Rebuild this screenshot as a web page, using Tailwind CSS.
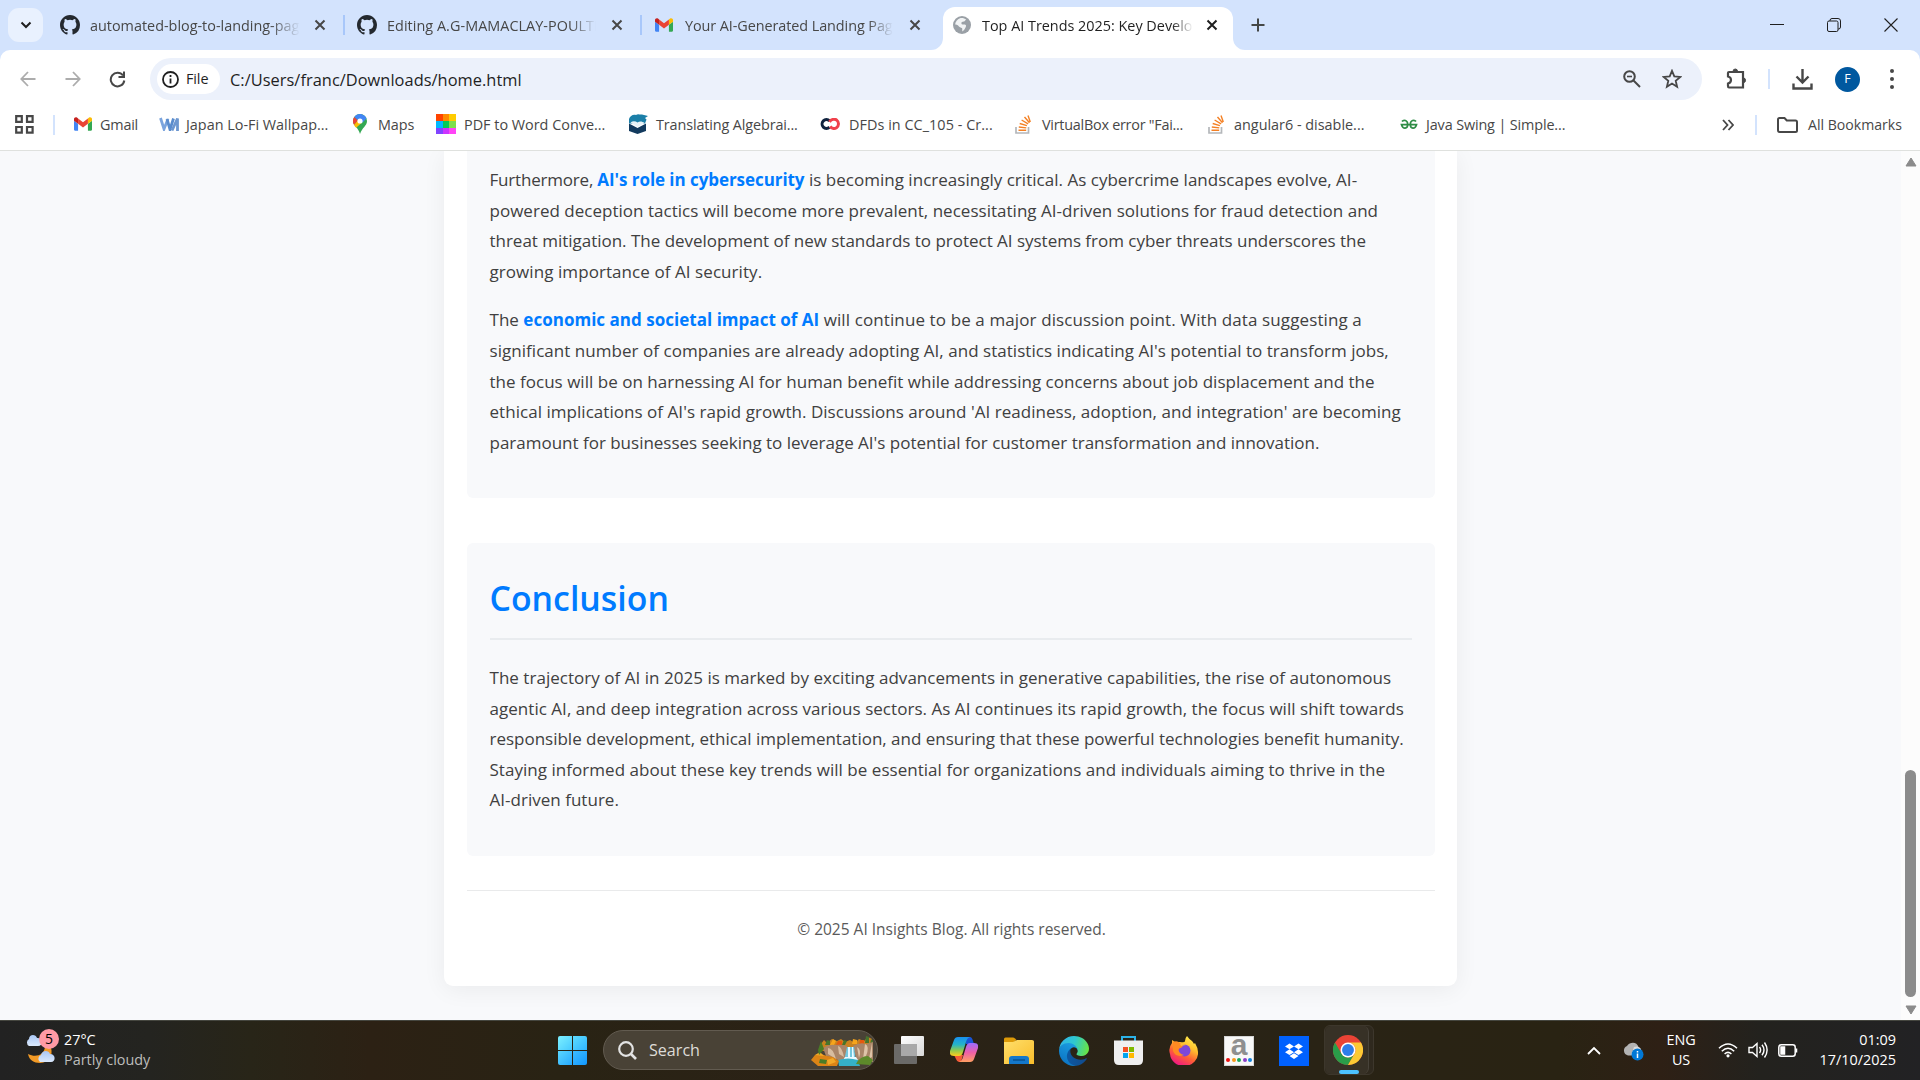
<!DOCTYPE html>
<html lang="en">
<head>
<meta charset="utf-8">
<title>Top AI Trends 2025</title>
<script src="https://cdn.jsdelivr.net/npm/@tailwindcss/browser@4"></script>
</head>
<body class="w-[1920px] h-[1080px] overflow-hidden flex flex-col bg-white font-['Open_Sans',sans-serif] text-[#474747]">
<svg class="hidden">
  <defs>
    <symbol id="github" viewBox="0 0 16 16"><path fill="#24292f" d="M8 0C3.58 0 0 3.58 0 8c0 3.54 2.29 6.53 5.47 7.59.4.07.55-.17.55-.38 0-.19-.01-.82-.01-1.49-2.01.37-2.53-.49-2.69-.94-.09-.23-.48-.94-.82-1.13-.28-.15-.68-.52-.01-.53.63-.01 1.08.58 1.23.82.72 1.21 1.87.87 2.33.66.07-.52.28-.87.51-1.07-1.78-.2-3.64-.89-3.64-3.95 0-.87.31-1.59.82-2.15-.08-.2-.36-1.02.08-2.12 0 0 .67-.21 2.2.82a7.6 7.6 0 0 1 4 0c1.53-1.04 2.2-.82 2.2-.82.44 1.1.16 1.92.08 2.12.51.56.82 1.27.82 2.15 0 3.07-1.87 3.75-3.65 3.95.29.25.54.73.54 1.48 0 1.07-.01 1.93-.01 2.2 0 .21.15.46.55.38A8.01 8.01 0 0 0 16 8c0-4.42-3.58-8-8-8z"/></symbol>
    <symbol id="gmail" viewBox="52 42 88 66"><path fill="#4285f4" d="M58 108h14V74L52 59v43c0 3.32 2.69 6 6 6"/><path fill="#34a853" d="M120 108h14c3.32 0 6-2.69 6-6V59l-20 15"/><path fill="#fbbc04" d="M120 48v26l20-15v-8c0-7.42-8.47-11.65-14.4-7.2"/><path fill="#ea4335" d="M72 74V48l24 18 24-18v26L96 92"/><path fill="#c5221f" d="M52 51v8l20 15V48l-5.6-4.2c-5.94-4.45-14.4-.22-14.4 7.2"/></symbol>
    <symbol id="close" viewBox="0 0 12 12"><path d="M1.5 1.5l9 9M10.500 1.500l-9 9" stroke="currentColor" stroke-width="2" fill="none"/></symbol>
    <symbol id="stack" viewBox="0 0 16 19"><path d="M1 12v6h12.500v-6" fill="none" stroke="#b4b7ba" stroke-width="1.700"/><path d="M3.500 15.200h7.700M3.800 12l7.500.9M4.700 8.500l7.200 2.200M6.600 5l6.500 3.900M9.500 2l5 5.800M13 .5l2.300 6.500" stroke="#f48024" stroke-width="1.400" fill="none"/></symbol>
  </defs>
</svg>

<!-- Tab strip -->
<header class="h-[50px] shrink-0 bg-[#d3e3fd] flex items-center text-[14.4px] leading-[20px] relative">
  <button class="ml-2 w-[35px] h-[34px] rounded-[11px] bg-[#e9f1fe] flex items-center justify-center"><svg width="12" height="8" viewBox="0 0 12 8"><path d="M1.500 1.500L6 6l4.500-4.500" fill="none" stroke="#1f1f1f" stroke-width="2"/></svg></button>
  <div class="ml-[17px] w-[297px] flex items-center">
    <svg class="w-5 h-5 shrink-0"><use href="#github"/></svg>
    <span class="ml-[10px] w-[210px] pt-px overflow-hidden whitespace-nowrap mask-r-from-86%">automated-blog-to-landing-page</span>
    <svg class="ml-[14px] w-3 h-3"><use href="#close"/></svg>
    <i class="ml-[17px] w-[2px] h-5 bg-[#a8c7fa]"></i>
  </div>
  <div class="w-[298px] flex items-center">
    <svg class="w-5 h-5 shrink-0"><use href="#github"/></svg>
    <span class="ml-[10px] w-[209px] pt-px overflow-hidden whitespace-nowrap mask-r-from-88% tracking-[0.050px]">Editing A.G-MAMACLAY-POULTRY</span>
    <svg class="ml-[15px] w-3 h-3"><use href="#close"/></svg>
    <i class="ml-[17px] w-[2px] h-5 bg-[#a8c7fa]"></i>
  </div>
  <div class="w-[288px] flex items-center">
    <svg class="w-[18px] h-[14px] shrink-0"><use href="#gmail"/></svg>
    <span class="ml-3 w-[208px] pt-px overflow-hidden whitespace-nowrap mask-r-from-88% tracking-[-0.070px]">Your AI-Generated Landing Page</span>
    <svg class="ml-4 w-3 h-3"><use href="#close"/></svg>
  </div>
  <div class="w-[290px] h-[43px] mt-[7px] rounded-t-[12px] bg-white flex items-center pb-[7px] pl-[10px] text-[#1f1f1f] relative">
    <svg class="w-[18px] h-[18px] shrink-0" viewBox="0 0 18 18"><circle cx="9" cy="9" r="9" fill="#9aa0a6"/><path d="M7 2.200c2-.6 4.500-.1 6.300 1.600-1 .2-1.200 1.500-2.400 1.700-1.700.2-2.600.6-2.500 1.900.1 1.200 2 .9 3.500 1.100 1.600.3 1.300 1.900.5 3.200-.8 1.200-1.300 2.600-2.900 3.700-.7-1.200.3-2.300-.6-3.300-1-1-2.600-.8-3.400-2.200-.6-1-2.100-1.500-3.400-1.500C2.400 6 4.300 3.200 7 2.200z" fill="#f1f3f4"/></svg>
    <span class="ml-[11px] w-[211px] pt-px overflow-hidden whitespace-nowrap mask-r-from-90%">Top AI Trends 2025: Key Developments</span>
    <svg class="ml-[13px] w-3 h-3"><use href="#close"/></svg>
    <svg class="absolute -left-3 bottom-0" width="12" height="12"><path d="M12 0v12H0A12 12 0 0 0 12 0z" fill="#fff"/></svg>
    <svg class="absolute -right-3 bottom-0" width="12" height="12"><path d="M0 0v12h12A12 12 0 0 1 0 0z" fill="#fff"/></svg>
  </div>
  <svg class="ml-[18px]" width="14" height="14" viewBox="0 0 14 14"><path d="M7 .5v13M.5 7h13" stroke="#444746" stroke-width="2"/></svg>
  <div class="ml-auto mr-[22px] flex items-center gap-[43px] -mt-px">
    <svg width="14" height="14"><path d="M0 6.500h14" stroke="#1f1f1f"/></svg>
    <svg width="14" height="14" fill="none" stroke="#1f1f1f"><path d="M3 3V2.500A2 2 0 0 1 5 .500h6A2.500 2.500 0 0 1 13.500 3v6a2 2 0 0 1-2 2H11"/><rect x=".5" y="3" width="10.500" height="10.500" rx="1.500"/></svg>
    <svg width="14" height="14"><path d="M.5.5l13 13M13.500.500l-13 13" stroke="#1f1f1f" stroke-width="1.100"/></svg>
  </div>
</header>

<!-- Toolbar -->
<div class="h-[58px] shrink-0 bg-[#d3e3fd]"><div class="h-full bg-white rounded-t-[10px] flex items-center">
  <div class="ml-5 w-[130px] flex items-center gap-[29px]">
    <svg width="16" height="16" fill="none" stroke="#acacac" stroke-width="1.800"><path d="M15.500 8H1.500M8 1L1.300 8 8 15"/></svg>
    <svg width="16" height="16" fill="none" stroke="#acacac" stroke-width="1.800"><path d="M.5 8h14M8 1l6.700 7L8 15"/></svg>
    <svg class="-ml-px" width="17" height="17" fill="none" stroke="#474747" stroke-width="2"><path d="M14 4.500A6.800 6.800 0 1 0 15.300 9.500"/><path d="M15 .500v5.500H9.500" /></svg>
  </div>
  <div class="w-[1552px] h-[42px] rounded-full bg-[#ecf1fb] flex items-center pl-[7px] pr-5 text-[#1f1f1f]">
    <div class="w-[63px] h-[30px] rounded-full bg-white flex items-center pl-[5px] gap-[7px] text-[14.400px] font-medium tracking-[-0.100px]">
      <svg width="17" height="17" viewBox="0 0 17 17" class="shrink-0"><circle cx="8.500" cy="8.500" r="7.500" fill="none" stroke="#1f1f1f" stroke-width="1.800"/><path d="M8.500 7.500v5M8.500 4v2" stroke="#1f1f1f" stroke-width="1.800"/></svg>File</div>
    <span class="ml-[10px] pt-px text-[16.4px] leading-6 tracking-[0.030px]">C:/Users/franc/Downloads/home.html</span>
    <div class="ml-auto flex items-center gap-[21px]">
      <svg width="18" height="18" fill="none" stroke="#474747" stroke-width="2"><circle cx="6.500" cy="6.500" r="5.300"/><path d="M10.500 10.500l6.500 6.500"/><path d="M4 6.500h5" stroke-width="1.600"/></svg>
      <svg width="20" height="20" viewBox="0 0 20 20" fill="none" stroke="#474747" stroke-width="1.800"><path d="M10 1.800l2.300 5.600 6 .5-4.600 3.900 1.400 5.900L10 14.500l-5.100 3.200 1.400-5.900L1.700 7.900l6-.5z"/></svg>
    </div>
  </div>
  <div class="ml-6 w-[190px] flex items-center">
    <svg width="21" height="22" viewBox="0 0 21 22" fill="none" stroke="#474747" stroke-width="2.200"><path d="M3 4h14v15.500H3q-1 0-1-1.500v-2.500c4-1.200 4-6 0-7V5q0-1 1-1z"/><path d="M7 3.500a2.300 2.500 0 0 1 4.600 0zM17.500 10a2 2.300 0 0 1 0 4.600z" fill="#474747" stroke-width="1"/></svg>
    <i class="ml-[21px] w-[2px] h-5 bg-[#d3e3fd]"></i>
    <svg class="ml-[22px]" width="21" height="22" fill="none" stroke="#474747" stroke-width="2.400"><path d="M10.500 1v13M4.500 8.500l6 6 6-6M1.500 15.500v5h18v-5"/></svg>
    <div class="ml-[22px] w-[25px] h-[25px] rounded-full bg-[#00589f] text-white text-[12.500px] flex items-center justify-center">F</div>
    <svg class="ml-[29px]" width="6" height="20" fill="#474747"><circle cx="3" cy="2" r="2"/><circle cx="3" cy="10" r="2"/><circle cx="3" cy="18" r="2"/></svg>
  </div>
</div></div>

<!-- Bookmarks bar -->
<nav class="h-[43px] shrink-0 border-b border-[#dfe1de] flex items-center pb-[9px] text-[14.400px] whitespace-nowrap pl-[15px]">
  <svg class="shrink-0" width="19" height="19" fill="none" stroke="#474747" stroke-width="2.200"><path d="M1.200 1.200h5.600v5.600H1.200zM12 1.200h5.600v5.600H12zM1.200 12h5.600v5.600H1.200zM12 12h5.600v5.600H12z"/></svg>
  <i class="ml-[19px] w-[2px] h-5 bg-[#d3e3fd]"></i>
  <div class="ml-[19px] w-[85px] flex items-center gap-2"><svg class="w-[18px] h-[14px]"><use href="#gmail"/></svg><span class="tracking-[-0.2px]">Gmail</span></div>
  <div class="w-[194px] flex items-center gap-[6px]"><svg width="21" height="14" fill="none" stroke-width="2.800"><path d="M1.500 1l3.500 11L9 2" stroke="#7ba4dd"/><path d="M8 2l3 10.500 3.500-11" stroke="#5a8ccd"/><path d="M13 13.500l5.500-12V14" stroke="#6d97d0"/></svg>Japan Lo-Fi Wallpap...</div>
  <div class="w-[83px] flex items-center gap-[11px]"><svg width="14" height="20" viewBox="0 0 14 20"><path d="M7 0a7 7 0 0 1 7 7c0 5-5 6.500-7 13C5.500 13.500 0 12 0 7a7 7 0 0 1 7-7z" fill="#34a853"/><path d="M1 10.800L9.500.500l-1 8.500-5.300 4.800C2.300 13 1.500 12 1 10.800z" fill="#fbbc04"/><path d="M1.300 3l3.700 3.200L1 10.800C-.6 8-.3 5 1.300 3z" fill="#ea4335"/><path d="M1.300 3C3 .500 6-.500 9.300.400c2 .7 3.500 2 4.200 4L9.500 8.500 5 6.300z" fill="#4285f4"/><circle cx="7" cy="7" r="2.600" fill="#fff"/></svg><span class="tracking-[-0.1px]">Maps</span></div>
  <div class="w-[192px] flex items-center gap-2"><span class="w-5 h-5 grid grid-cols-3"><i class="bg-[#ff4400]"></i><i class="bg-[#ff8a00]"></i><i class="bg-[#ffcc00]"></i><i class="bg-[#00b8ff]"></i><i class="bg-[#00cc55]"></i><i class="bg-[#7ce04c]"></i><i class="bg-[#8044ff]"></i><i class="bg-[#cc33ff]"></i><i class="bg-[#ff44f6]"></i></span>PDF to Word Conve...</div>
  <div class="w-[192px] flex items-center gap-[8px]"><svg width="20" height="20" viewBox="0 0 20 20"><path d="M1 8V5c1-3 4-5 7-4 2-1.500 4 0 6-.500L20 2l-3 2 1.500 1.500L17 9.500H1z" fill="#1b7fa8"/><path d="M1 9.500l8.500 4.500 8.500-4.500V17l-8.500 3L1 17z" fill="#123a5e"/><path d="M2.500 8.500c2.500-2 5-1.500 7 0 2-1.500 4.500-1.500 7 .500l-7 4z" fill="#e8f2f7"/></svg><span class="tracking-[-0.120px]">Translating Algebrai...</span></div>
  <div class="w-[195px] flex items-center gap-2"><svg width="21" height="12" fill="none" stroke-width="3"><path d="M9.500 2.800A4.400 4.400 0 1 0 9.500 9.200" stroke="#10233f"/><path d="M9.500 3.800c2-3 5.500-3 7.200-1.700 2.500 2 2.300 6-.2 7.600-2.400 1.500-5 .5-6.300-1.400" stroke="#f0414b"/></svg><span class="tracking-[0.050px]">DFDs in CC_105 - Cr...</span></div>
  <div class="w-[193px] flex items-center gap-[11px]"><svg class="w-4 h-[19px]"><use href="#stack"/></svg><span class="tracking-[-0.250px]">VirtualBox error "Fai...</span></div>
  <div class="w-[192px] flex items-center gap-[10px]"><svg class="w-4 h-[19px]"><use href="#stack"/></svg>angular6 - disable...</div>
  <div class="flex items-center gap-2"><svg width="18" height="11" fill="none" stroke="#2f8d46" stroke-width="1.700"><path d="M2 2.500C3.500.500 7.700 1 7.700 5.500S3 10.500 1.500 5.700H16.500C15 10.500 10.300 10 10.300 5.500S14.500.500 16 2.500"/></svg><span class="tracking-[-0.130px]">Java Swing | Simple...</span></div>
  <svg class="ml-auto" width="12" height="12" fill="none" stroke="#474747" stroke-width="1.800"><path d="M1 1l4.500 5L1 11M6.500 1L11 6l-4.500 5"/></svg>
  <i class="ml-[21px] w-[2px] h-5 bg-[#d3e3fd]"></i>
  <svg class="ml-5" width="21" height="16" fill="none" stroke="#474747" stroke-width="2"><path d="M1 13V2.500Q1 1 2.500 1H7.500l2.300 2.500H18.500Q20 3.500 20 5v8.500q0 1.500-1.500 1.500H2.500Q1 15 1 13z"/></svg>
  <span class="ml-[10px] mr-[18px] text-[14.1px]">All Bookmarks</span>
</nav>

<!-- Page viewport -->
<div class="flex-1 min-h-0 flex overflow-hidden">
  <main class="flex-1 bg-[#f8f9fb] overflow-hidden">
    <div class="ml-[444px] w-[1013px] h-[835px] bg-white rounded-b-[9px] shadow-[0_4px_23px_rgba(0,0,0,0.06)] pl-[23px] pr-[22px] text-[17px] leading-[30.6px] tracking-[0.020px] text-[#404040] whitespace-nowrap">
      <section class="h-[347px] bg-[#f8f9fb] rounded-b-md pl-[22.500px] pr-[23px] pt-[14px]">
        <p><span class="tracking-[-0.200px]">Furthermore, </span><strong class="text-[#007bff] font-bold tracking-[-0.060px]">AI's role in cybersecurity</strong> is becoming increasingly critical. As cybercrime landscapes evolve, AI-<br>powered deception tactics will become more prevalent, necessitating AI-driven solutions for fraud detection and<br><span class="tracking-[-0.020px]">threat mitigation. The development of new standards to protect AI systems from cyber threats underscores the</span><br><span class="tracking-[0.070px]">growing importance of AI security.</span></p>
        <p class="mt-[18px]">The <strong class="text-[#007bff] font-bold">economic and societal impact of AI</strong> <span class="tracking-[0.110px]">will continue to be a major discussion point. With data suggesting a</span><br><span class="tracking-[0.040px]">significant number of companies are already adopting AI, and statistics indicating AI's potential to transform jobs,</span><br>the focus will be on harnessing AI for human benefit while addressing concerns about job displacement and the<br><span class="tracking-[0.040px]">ethical implications of AI's rapid growth. Discussions around 'AI readiness, adoption, and integration' are becoming</span><br><span class="tracking-[-0.008px]">paramount for businesses seeking to leverage AI's potential for customer transformation and innovation.</span></p>
      </section>
      <section class="mt-[45px] h-[313px] bg-[#f8f9fb] rounded-md pl-[22.500px] pr-[23px] pt-[23px]">
        <h2 class="h-[74px] pt-[7px] border-b-2 border-[#e9ecef] text-[33.800px] leading-[50px] font-semibold text-[#007bff]">Conclusion</h2>
        <p class="mt-[23px]"><span class="tracking-[0.030px]">The trajectory of AI in 2025 is marked by exciting advancements in generative capabilities, the rise of autonomous</span><br><span class="tracking-[0.035px]">agentic AI, and deep integration across various sectors. As AI continues its rapid growth, the focus will shift towards</span><br><span class="tracking-[-0.010px]">responsible development, ethical implementation, and ensuring that these powerful technologies benefit humanity.</span><br><span class="tracking-[0.035px]">Staying informed about these key trends will be essential for organizations and individuals aiming to thrive in the</span><br>AI-driven future.</p>
      </section>
      <footer class="mt-[34px] border-t border-[#e9eaeb] pt-[24px] pl-px text-center text-[15.500px] tracking-normal leading-[28px] text-[#5a5a5a]">© 2025 AI Insights Blog. All rights reserved.</footer>
    </div>
  </main>
  <aside class="w-[19px] bg-[#fcfcfc] flex flex-col items-center pt-[6px] pb-[5px]">
    <svg width="12" height="10"><path d="M6 1l5 8H1z" fill="#8b8b8b" stroke="#8b8b8b" stroke-linejoin="round"/></svg>
    <div class="mt-auto mb-2 w-[11px] h-[227px] rounded-full bg-[#8b8b8b]"></div>
    <svg width="12" height="10"><path d="M6 9L1 1h10z" fill="#8b8b8b" stroke="#8b8b8b" stroke-linejoin="round"/></svg>
  </aside>
</div>

<!-- Taskbar -->
<div class="h-[60px] shrink-0 border-t border-[#45463f] bg-[linear-gradient(90deg,#222222_0,#242420_150px,#282518_250px,#2c2114_370px,#292314_560px,#2b2216_800px,#292316_1200px,#292313_1560px,#2e2015_1660px,#23221e_1760px,#222224_1920px)] flex items-center text-white text-[14.400px] leading-[20px] whitespace-nowrap">
  <div class="w-[558px] h-full flex items-center pl-[25px]">
    <div class="relative w-[34px] h-[42px] -mt-[6px]">
      <svg width="34" height="42" viewBox="0 0 34 42"><defs><linearGradient id="cl" x1="0" y1="0" x2="0" y2="1"><stop stop-color="#a9c7f5"/><stop offset="1" stop-color="#dbe9fc"/></linearGradient></defs><path d="M26 21c2 6-1 15-11 15-6 0-11-3-12-9 8 4 16 1 17-7z" fill="#f29a26"/><path d="M4 19a4 4 0 0 1 0-7C4 7 11 7 12 11c5-1 7 8 1 8z" fill="url(#cl)"/><path d="M15 35a4 4 0 0 1 1-7c1-5 8-5 9-1 6 0 6 8 1 8z" fill="url(#cl)"/></svg>
      <span class="absolute left-[14px] top-[2px] w-5 h-5 rounded-full bg-[#ff9aa5] text-black text-[14px] flex items-center justify-center">5</span>
    </div>
    <div class="ml-[5px] -mt-[2px]"><div>27°C</div><div class="text-[#bdbdbb]">Partly cloudy</div></div>
  </div>
  <div class="w-[29px] h-[29px] grid grid-cols-2 gap-px"><i class="rounded-tl-xs bg-linear-to-br from-[#7cf0ff] to-[#45c9ff]"></i><i class="rounded-tr-xs bg-linear-to-br from-[#5ddcff] to-[#2fb4ff]"></i><i class="rounded-bl-xs bg-linear-to-br from-[#5ad6ff] to-[#25a9ff]"></i><i class="rounded-br-xs bg-linear-to-br from-[#3cbcff] to-[#0f98ff]"></i></div>
  <div class="ml-4 -mt-px w-[275px] h-10 rounded-full bg-[#494236] border border-[#625b50] flex items-center pl-[14px] pr-[4px] text-[#dedcd8] text-[16.100px]">
    <svg width="19" height="19" fill="none" stroke="#e3e3e3" stroke-width="2.200"><circle cx="8" cy="8" r="6.800"/><path d="M13 13l5 5" stroke-width="2.600"/></svg>
    <span class="ml-3">Search</span>
    <svg class="ml-auto mt-[2px]" width="62" height="30" viewBox="0 0 62 30"><path d="M10 8l3-4 3 3 5-4 5 2 4-2 4 3 5-2 5 3 4-4 5 2 4-4 4 2v12H10z" fill="#c9821e"/><path d="M16 4l3 1v4h-5zM33 4l3 1-2 4h-3zM55 0l3 1v6h-4zM60 3l2 2v4h-3z" fill="#47742c"/><path d="M22 3l3 2-2 4h-4zM42 3l4 1v4h-5z" fill="#f6a51b"/><path d="M27 5h4v4h-6zM49 4h4v5h-5z" fill="#e4590f"/><path d="M12 12q6-4 12-3 6-1 12 1l1 12-7 3L15 20z" fill="#a98568"/><path d="M17 12q5 0 8 11l-8-5zM27 10q4 1 6 11l-5-3z" fill="#d8bda0"/><path d="M42 10q7-4 13-2l7-2v20H46z" fill="#a98568"/><path d="M46 11q5 3 2 11zM54 8q5 2 1 12l-3 3zM61 7v14l-3 2z" fill="#dec4a8"/><path d="M36 11h7l2 14H33z" fill="#74c8de"/><path d="M37 11h2v11h-2zM41 11h1l1 11h-2zM34 21h11l2 3H32z" fill="#e9faff"/><path d="M27 24q10-3 20 0l2 6H28z" fill="#35b1c8"/><path d="M0 24l4-5 6-1 6 2 6 1 6 4-2 5H7z" fill="#dc8416"/><path d="M4 19l5-3 4 4zM16 24l6-2 3 4-8 3z" fill="#f2a928"/><path d="M9 23l7 1-1 4-7-1zM10 5l3 8-5 6-1-5z" fill="#4b7c26"/><path d="M45 28q4-8 12-8l5 4-3 5z" fill="#5d8a2a"/></svg>
  </div>
  <svg class="ml-4" width="30" height="29"><defs><linearGradient id="tv" x1="0" y1="0" x2="1" y2="1"><stop stop-color="#fff"/><stop offset="1" stop-color="#d8d8d8"/></linearGradient></defs><rect x="7" y="0" width="23" height="20" rx="1" fill="url(#tv)"/><rect x="0" y="8" width="23" height="20" rx="1" fill="#777" fill-opacity=".85"/><rect x="7" y="8" width="16" height="12" fill="#a9a9a9"/></svg>
  <svg class="ml-[26px] -mt-[2px]" width="28" height="25" viewBox="0 0 28 25"><defs><linearGradient id="c1" x1="0" y1="0" x2="0" y2="1"><stop stop-color="#1890f0"/><stop offset=".4" stop-color="#25b3c9"/><stop offset=".7" stop-color="#8cc950"/><stop offset="1" stop-color="#ffcb1c"/></linearGradient><linearGradient id="c2" x1="0" y1="0" x2="0" y2="1"><stop stop-color="#9d6bff"/><stop offset=".5" stop-color="#ee5fa8"/><stop offset="1" stop-color="#ff9f62"/></linearGradient></defs><path d="M14 0h6q2 0 3 4l1 3H16z" fill="#1954d6"/><path d="M4 18h9l-2 7H9q-2 0-3-3z" fill="#f45a38"/><path d="M8 0h12q-3 1-4 5l-3 10q-1 4-4 4H4Q-1 19 0 14L4 3q1-3 4-3z" fill="url(#c1)"/><path d="M20 25H9q3-1 4-5l3-10q1-4 4-4h4q5 0 4 5l-4 11q-1 3-4 3z" fill="url(#c2)"/></svg>
  <svg class="ml-[26px]" width="30" height="27" viewBox="0 0 30 27"><defs><linearGradient id="ex" x1="0" y1="0" x2="1" y2="1"><stop stop-color="#ffdf6b"/><stop offset="1" stop-color="#f9bd2b"/></linearGradient></defs><path d="M0 2Q0 .5 1.500.500H9q1 0 2 1L12.500 3 9 6H0z" fill="#dd9a08"/><path d="M0 5h9l4-2h15q2 0 2 1.500V27H0z" fill="url(#ex)"/><path d="M5 27v-5q0-3 3-3h14q3 0 3 3v5z" fill="#1478cb"/><path d="M9 23h12" stroke="#07508f" stroke-width="1.400"/></svg>
  <svg class="ml-[25px]" width="30" height="30" viewBox="0 0 256 256"><defs><linearGradient id="e1" x1="0" y1="0" x2="1" y2="0"><stop stop-color="#0c59a4"/><stop offset="1" stop-color="#114a8b"/></linearGradient><linearGradient id="e2" x1=".6" y1="0" x2=".2" y2="1"><stop stop-color="#1b9de2"/><stop offset="1" stop-color="#0a70c0"/></linearGradient><linearGradient id="e3" x1="0" y1=".3" x2="1" y2=".5"><stop stop-color="#2fb3ea"/><stop offset=".5" stop-color="#2fc8cf"/><stop offset="1" stop-color="#67e346"/></linearGradient></defs><path d="M231 190.500c-3.400 1.800-6.900 3.400-10.500 4.700a101.600 101.600 0 0 1-35.900 6.500c-47.300 0-88.500-32.500-88.500-74.300 0-11.400 6.400-21.900 16.600-27.300-42.800 1.800-53.800 46.400-53.800 72.500 0 74 68.100 81.400 82.800 81.400 7.900 0 19.800-2.300 27-4.600l1.300-.4a128.300 128.300 0 0 0 66.600-52.800 4 4 0 0 0-5.600-5.700z" fill="url(#e1)"/><path d="M105.700 241.400A79.200 79.200 0 0 1 83 220a80.700 80.700 0 0 1 29.500-120c3.100-1.500 8.500-4.100 15.600-4a32.400 32.400 0 0 1 25.700 13 31.900 31.900 0 0 1 6.300 18.700c0-.2 24.500-79.600-80-79.600-43.900 0-80 41.700-80 78.200a130.200 130.200 0 0 0 12.100 56A128 128 0 0 0 168.500 249a75.600 75.600 0 0 1-62.800-7.600z" fill="url(#e2)"/><path d="M152.300 148.900c-.9 1-3.400 2.500-3.400 5.600 0 2.600 1.700 5.200 4.800 7.300 14.300 10 41.400 8.600 41.500 8.600a59.600 59.600 0 0 0 30.300-8.300A61.400 61.400 0 0 0 256 109.200c.3-22.400-8-37.300-11.300-43.900C223.500 23.900 177.700 0 128 0A128 128 0 0 0 0 126.200c.5-36.500 36.800-66 80-66 3.500 0 23.500.3 42 10a72.600 72.600 0 0 1 30.900 29.300c6.100 10.600 7.200 24.100 7.200 29.500s-2.700 13.300-7.800 19.900z" fill="url(#e3)"/></svg>
  <svg class="ml-[25px]" width="29" height="29" viewBox="0 0 29 29"><path d="M8 6V1h13v5" fill="none" stroke="#2cb3e8" stroke-width="2"/><path d="M0 4.500h29V24q0 5-5 5H5q-5 0-5-5z" fill="#efefef"/><path d="M9 11h5v5H9z" fill="#f25022"/><path d="M15 11h5v5h-5z" fill="#7fba00"/><path d="M9 17h5v5H9z" fill="#00a4ef"/><path d="M15 17h5v5h-5z" fill="#ffb900"/></svg>
  <svg class="ml-[26px] -mt-px" width="29" height="29" viewBox="0 0 29 29"><defs><linearGradient id="f1" x1=".8" y1="0" x2=".3" y2="1"><stop stop-color="#fff14f"/><stop offset=".35" stop-color="#ffc02e"/><stop offset=".65" stop-color="#ff6034"/><stop offset="1" stop-color="#f0128a"/></linearGradient></defs><path d="M18 0q2 3 5 5 1 1 2 3l1-1q3 5 3 9A14 13 0 0 1 1 18Q-1 12 3 7V4l3 2 5 0q5 1 5-1 0-3 2-5z" fill="url(#f1)"/><circle cx="15.500" cy="14.500" r="6" fill="#7c47d8"/><path d="M4 6q4-2 7 1l3 3q-1 2-5 3 1 5 6 6-8 3-11-4z" fill="#ff8a22"/><path d="M12 10l5-1q-3-2-6-1z" fill="#ffb731"/></svg>
  <div class="ml-[26px] w-[30px] h-[30px] bg-[#f8f8f8] border border-[#d5d5d5] flex flex-col items-center overflow-hidden">
    <b class="h-[21px] text-[#8f8f8f] text-[30px] leading-[15px] font-bold font-['Liberation_Sans',sans-serif]">a</b>
    <span class="flex gap-[1.500px]"><i class="w-1 h-1 rounded-full bg-[#e11]"></i><i class="w-1 h-1 rounded-full bg-[#f79a1c]"></i><i class="w-1 h-1 rounded-full bg-[#1ba65a]"></i><i class="w-1 h-1 rounded-full bg-[#8b3fc9]"></i><i class="w-1 h-1 rounded-full bg-[#1284dc]"></i></span>
  </div>
  <svg class="ml-[25px]" width="30" height="30"><rect width="30" height="30" fill="#0061fe"/><path d="M10.500 7.500L15 10.400 10.500 13.300 6 10.400zM19.500 7.500L24 10.400 19.500 13.300 15 10.400zM10.500 13.300L15 16.200 10.500 19.100 6 16.200zM19.500 13.300L24 16.200 19.500 19.100 15 16.200zM15 17.200l4.500 2.900L15 23l-4.500-2.900z" fill="#fff"/></svg>
  <div class="ml-[15px] -mt-px w-[50px] h-[50px] rounded-md bg-[#2f291e] border border-[#3d372c]"><div class="relative w-[44px] h-[48px] rounded-md border-r border-[#48433a] bg-[#373126] flex flex-col items-center pt-[9px] pl-[3px]">
    <svg width="30" height="30" viewBox="0 0 48 48"><circle cx="24" cy="24" r="24" fill="#ea4335"/><path d="M3.200 12A24 24 0 0 0 24 48l10.400-18A12 12 0 0 1 13.600 30z" fill="#2a9d49"/><path d="M44.800 12A24 24 0 0 1 24 48l10.400-18A12 12 0 0 0 24 12z" fill="#fcc934"/><circle cx="24" cy="24" r="12" fill="#fff"/><circle cx="24" cy="24" r="9.500" fill="#2f7de9"/></svg>
    <i class="absolute left-[14px] bottom-0 w-5 h-1 rounded-full bg-[#4cc2ff]"></i>
  </div></div>
  <div class="ml-auto mr-6 flex items-center">
    <svg width="14" height="9" fill="none" stroke="#fff" stroke-width="1.800"><path d="M1 8l6-6 6 6"/></svg>
    <svg class="ml-[22px] mt-px" width="21" height="19"><path d="M5 13.500a5 5 0 0 1-1-9.500C7-.5 14-.5 15.500 5c4 1 4 8.500 0 8.500z" fill="#b3b3b3"/><path d="M8 13l3-8q5-2 7 3v5z" fill="#dcdcdc"/><circle cx="14.500" cy="12.500" r="6" fill="#0078d7"/><path d="M14.500 11.500v4.500M14.500 9v1.500" stroke="#fff" stroke-width="1.500"/></svg>
    <div class="ml-[22px] -mt-px w-[30px] text-center tracking-[-0.100px]">ENG<br>US</div>
    <svg class="ml-[22px] -mt-[2px]" width="20" height="16" fill="none" stroke="#fff" stroke-width="1.500"><path d="M1 6.300q9-8.600 18 0M3.800 9.300q6.200-6 12.400 0M6.600 12q3.400-3.200 6.800 0"/><circle cx="10" cy="13.800" r="1.600" fill="#fff" stroke="none"/></svg>
    <svg class="ml-[10px] -mt-px" width="20" height="18" fill="none" stroke="#fff" stroke-width="1.400"><path d="M1 6.500h3.500L9 2.500v13l-4.500-4H1zM11.500 6q2.200 3 0 6M14 3.800q4 5.200 0 10.400M16.500 1.500q5.200 7.500 0 15"/></svg>
    <svg class="ml-[10px] -mt-px" width="20" height="13" fill="none" stroke="#fff" stroke-width="1.500"><rect x=".8" y=".8" width="16.400" height="11.400" rx="2.500"/><path d="M3 3h3.500v7H3zM18.500 4.500v4" fill="#fff"/></svg>
    <div class="ml-5 -mt-[2px] w-[78px] text-right">01:09<br>17/10/2025</div>
  </div>
</div>
</body>
</html>
